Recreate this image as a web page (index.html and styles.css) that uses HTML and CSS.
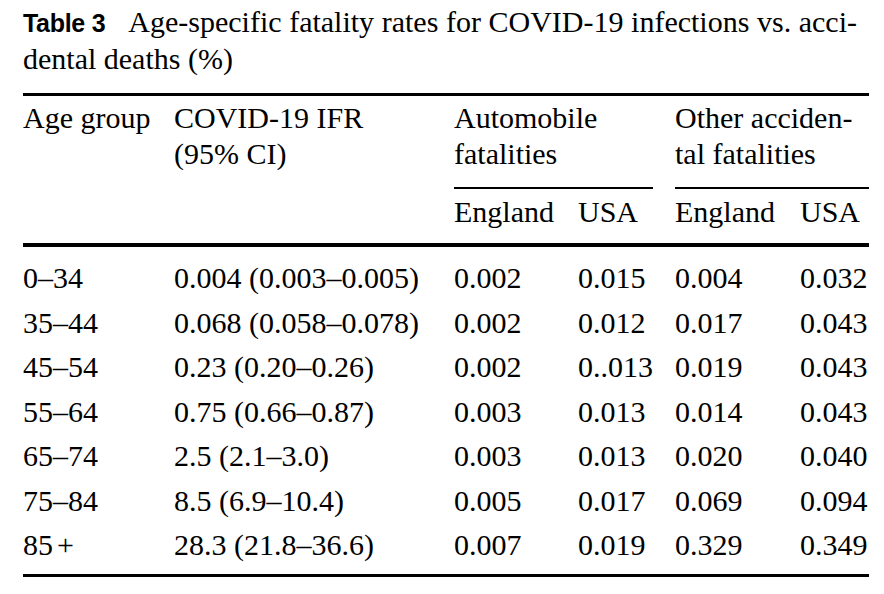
FILE: index.html
```html
<!DOCTYPE html>
<html lang="en">
<head>
<meta charset="utf-8">
<title>Table 3</title>
<link rel="stylesheet" href="styles.css">
</head>
<body>
<div class="page">
  <div class="caption">
    <span class="cap-line first"><span class="label">Table 3</span>Age-specific fatality rates for COVID-19 infections vs. acci-</span>
    <span class="cap-line">dental deaths (%)</span>
  </div>
  <table class="data">
    <colgroup>
      <col class="c1"><col class="c2"><col class="c3"><col class="c4"><col class="c5"><col class="c6">
    </colgroup>
    <thead>
      <tr class="h1">
        <th rowspan="2">Age group</th>
        <th rowspan="2">COVID-19 IFR<br>(95% CI)</th>
        <th colspan="2" class="span gap"><div class="span-in">Automobile<br>fatalities</div></th>
        <th colspan="2" class="span"><div class="span-in">Other acciden-<br>tal fatalities</div></th>
      </tr>
      <tr class="h2">
        <th>England</th><th>USA</th><th>England</th><th>USA</th>
      </tr>
    </thead>
    <tbody>
      <tr><td>0–34</td><td>0.004 (0.003–0.005)</td><td>0.002</td><td>0.015</td><td>0.004</td><td>0.032</td></tr>
      <tr><td>35–44</td><td>0.068 (0.058–0.078)</td><td>0.002</td><td>0.012</td><td>0.017</td><td>0.043</td></tr>
      <tr><td>45–54</td><td>0.23 (0.20–0.26)</td><td>0.002</td><td>0..013</td><td>0.019</td><td>0.043</td></tr>
      <tr><td>55–64</td><td>0.75 (0.66–0.87)</td><td>0.003</td><td>0.013</td><td>0.014</td><td>0.043</td></tr>
      <tr><td>65–74</td><td>2.5 (2.1–3.0)</td><td>0.003</td><td>0.013</td><td>0.020</td><td>0.040</td></tr>
      <tr><td>75–84</td><td>8.5 (6.9–10.4)</td><td>0.005</td><td>0.017</td><td>0.069</td><td>0.094</td></tr>
      <tr><td>85<span class="thin"> </span>+</td><td>28.3 (21.8–36.6)</td><td>0.007</td><td>0.019</td><td>0.329</td><td>0.349</td></tr>
    </tbody>
  </table>
</div>
</body>
</html>
```

FILE: styles.css
```css
html, body {
  margin: 0;
  padding: 0;
  background: #ffffff;
}

.page {
  padding: 4px 0 0 23px;
  color: #000000;
  font-family: "Liberation Serif", "Times New Roman", serif;
  font-size: 30px;
  line-height: 36px;
}

.caption {
  width: 834px;
}

.cap-line {
  display: block;
  white-space: nowrap;
}

.cap-line.first {
  text-align: justify;
  text-align-last: justify;
  white-space: normal;
}

.label {
  font-family: "Liberation Sans", Arial, sans-serif;
  font-weight: bold;
  font-size: 25px;
  letter-spacing: -0.3px;
  margin-right: 23px;
}

.data {
  margin-top: 16px;
  width: 846px;
  table-layout: fixed;
  border-collapse: separate;
  border-spacing: 0;
  border-top: 3px solid #000;
  border-bottom: 3px solid #000;
}

.c1 { width: 151px; }
.c2 { width: 280px; }
.c3 { width: 124px; }
.c4 { width: 97px; }
.c5 { width: 125px; }
.c6 { width: 69px; }

th, td {
  padding: 0;
  text-align: left;
  vertical-align: top;
  font-weight: normal;
  white-space: nowrap;
}

thead th[rowspan] {
  padding-top: 4px;
  border-bottom: 4px solid #000;
}

.h1 .span {
  padding-top: 4px;
}

.h1 .span.gap {
  padding-right: 22px;
}

.span-in {
  padding-bottom: 15px;
  border-bottom: 2.5px solid #000;
}

.h2 th {
  padding-top: 5px;
  padding-bottom: 13px;
  border-bottom: 4px solid #000;
}

tbody td {
  padding-top: 4.25px;
  padding-bottom: 4.25px;
}

tbody tr:first-child td {
  padding-top: 13px;
}

tbody tr:last-child td {
  padding-bottom: 11px;
}

.thin {
  display: inline-block;
  width: 4px;
}
```
